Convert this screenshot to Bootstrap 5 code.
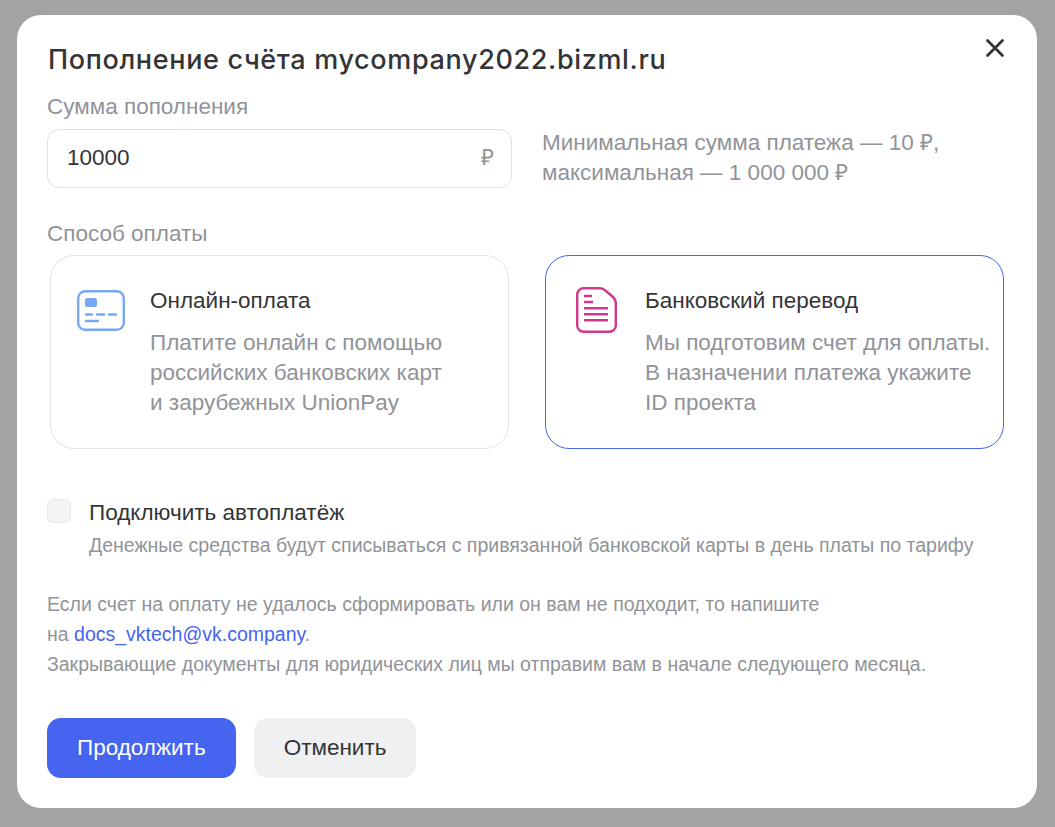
<!DOCTYPE html>
<html lang="ru"><head><meta charset="utf-8"><title>Пополнение счёта</title>
<link href="https://cdn.jsdelivr.net/npm/bootstrap@5.3.0/dist/css/bootstrap.min.css" rel="stylesheet">
<style>
html,body{height:827px;overflow:hidden}
body{background:#a3a3a3;font-family:"Liberation Sans",sans-serif;color:#333436;padding:15px 18px 19px 17px}
.pay-modal{width:1020px;height:793px;background:#fff;border-radius:24px;padding:28px 30px 0 30px;position:relative}
.pay-title{font-size:27px;line-height:34px;font-weight:500;margin:0;margin-left:1px;letter-spacing:.65px;color:#333436;font-family:"Inter",sans-serif}
.pay-close{position:absolute;top:23px;right:32px;width:20px;height:20px;padding:0;border:0;background:none;line-height:0}
.pay-label{font-size:22.5px;line-height:26px;color:#919399}
.pay-input{width:465px;height:59px;border:1px solid #dfe0e3;border-radius:12px;padding:0 17px 0 19px;font-size:22.5px;color:#333436}
.pay-rub{color:#919399}
.pay-hint{font-size:22.5px;line-height:30px;color:#919399;margin-left:30px}
.pay-cards{margin-top:8px}
.pay-card{width:459px;height:194px;border:1px solid #e2e3e6;border-radius:24px;padding:30px 10px 0 26px}
.pay-card.active{border-color:#4564f0;padding-left:29px;margin-right:3px}
.pay-first{margin-left:3px}
.pay-card-ico{width:48px;flex:none;margin-right:25px}
.pay-card.active .pay-card-ico{width:43px;margin-right:27px}
.pay-card-name{font-size:22.5px;line-height:30px;color:#333436}
.pay-card-text{font-size:22.5px;line-height:30px;color:#919399;margin-top:12px;white-space:nowrap}
.pay-check{width:24px;height:24px;border:1px solid #e8e9eb;border-radius:6px;background:#f5f5f7;flex:none;margin:-1px 18px 0 0}
.pay-auto{font-size:22.5px;line-height:26px;color:#333436}
.pay-sub{font-size:19.5px;line-height:26px;color:#919399;margin-top:6px;white-space:nowrap}
.pay-note{font-size:19.5px;line-height:30px;color:#919399;margin-top:31px;white-space:nowrap}
.pay-note a{color:#4564f0;text-decoration:none}
.pay-actions{gap:18px;margin-top:39px}
.pay-btn{height:60px;border-radius:14px;border:0;font-size:22.5px;padding:0 30px}
.pay-btn-main{background:#4564f0;color:#fff}
.pay-btn-alt{background:#eff0f2;color:#333436}
.pay-auto-row{margin-top:51px}
.pay-top{margin-top:17px}
.pay-way{margin-top:33px}
</style></head><body>
<div class="pay-modal">
<h1 class="pay-title">Пополнение счёта mycompany2022.bizml.ru</h1>
<button class="pay-close" aria-label="Закрыть"><svg width="20" height="20" viewBox="0 0 20 20"><path d="M2.500 2.500 17.500 17.500M17.500 2.500 2.500 17.500" stroke="#333436" stroke-width="2.800" stroke-linecap="round" fill="none"/></svg></button>
<div class="pay-label pay-top">Сумма пополнения</div>
<div class="d-flex align-items-center mt-2">
<div class="pay-input d-flex align-items-center justify-content-between"><span>10000</span><span class="pay-rub">₽</span></div>
<div class="pay-hint">Минимальная сумма платежа — 10 ₽,<br>максимальная — 1 000 000 ₽</div>
</div>
<div class="pay-label pay-way">Способ оплаты</div>
<div class="d-flex justify-content-between pay-cards">
<div class="pay-card pay-first d-flex">
<div class="pay-card-ico"><svg width="48" height="42" viewBox="0 0 48 42" fill="none" class="d-block mt-1"><rect x="1.200" y="1.200" width="45.600" height="38.600" rx="7" stroke="#76a8f6" stroke-width="2.400"/><rect x="8" y="8" width="12" height="9" rx="2.500" fill="#76a8f6"/><path d="M9 24.500H15M20 24.500H27M32 24.500H39M9 31H21" stroke="#76a8f6" stroke-width="2.400" stroke-linecap="round"/></svg></div>
<div><div class="pay-card-name">Онлайн-оплата</div><div class="pay-card-text">Платите онлайн с помощью<br>российских банковских карт<br>и зарубежных UnionPay</div></div>
</div>
<div class="pay-card active d-flex">
<div class="pay-card-ico"><svg width="42" height="48" viewBox="0 0 42 48" fill="none" class="d-block"><path d="M8.500 2.200H25C28 2.200 29.500 3.500 31 5L37.500 10.500C39.800 12.500 40.800 14 40.800 17V39.500a6.300 6.300 0 0 1-6.300 6.300H8.500a6.300 6.300 0 0 1-6.300-6.300V8.500a6.300 6.300 0 0 1 6.300-6.300Z" stroke="#d03a8e" stroke-width="2.400"/><path d="M9 10H17M9 16H18M9 22.300H33M9 28.300H33M9 34.300H33" stroke="#d03a8e" stroke-width="2.400"/></svg></div>
<div><div class="pay-card-name">Банковский перевод</div><div class="pay-card-text">Мы подготовим счет для оплаты.<br>В назначении платежа укажите<br>ID проекта</div></div>
</div>
</div>
<div class="d-flex pay-auto-row">
<div class="pay-check"></div>
<div><div class="pay-auto">Подключить автоплатёж</div><div class="pay-sub">Денежные средства будут списываться с привязанной банковской карты в день платы по тарифу</div></div>
</div>
<div class="pay-note">Если счет на оплату не удалось сформировать или он вам не подходит, то напишите<br>на <a href="#">docs_vktech@vk.company</a>.<br>Закрывающие документы для юридических лиц мы отправим вам в начале следующего месяца.</div>
<div class="d-flex pay-actions">
<button class="pay-btn pay-btn-main">Продолжить</button>
<button class="pay-btn pay-btn-alt">Отменить</button>
</div>
</div>
</body></html>
